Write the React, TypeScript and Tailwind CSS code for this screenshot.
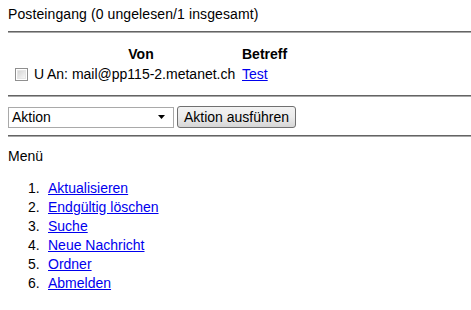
import React from "react";

function Hr({ className = "" }: { className?: string }) {
  return (
    <div className={`h-[2px] border-t border-t-[#646464] border-b border-b-[#a8a8a8] ${className}`} />
  );
}

export default function App() {
  const items = [
    "Aktualisieren",
    "Endgültig löschen",
    "Suche",
    "Neue Nachricht",
    "Ordner",
    "Abmelden",
  ];
  return (
    <div className="w-[471px] h-[310px] bg-white pl-2 text-[14px] leading-[16px] text-black font-['Liberation_Sans',Arial,sans-serif] overflow-hidden">
      <div className="pt-[6px] h-[22px] whitespace-nowrap tracking-[0.1px]">Posteingang (0 ungelesen/1 insgesamt)</div>
      <Hr className="mt-[9px]" />

      <div className="mt-[13px] flex h-[16px] font-bold whitespace-nowrap">
        <div className="w-[26px]" />
        <div className="w-[12px]" />
        <div className="w-[190px] text-center">Von</div>
        <div className="ml-[6px]">Betreff</div>
      </div>

      <div className="mt-[4px] flex h-[16px] items-center whitespace-nowrap">
        <div className="w-[26px] flex items-center">
          <span className="ml-[7px] w-[13px] h-[13px] border border-[#8f8f8f] bg-white p-[1px] flex">
            <span className="flex-1 bg-gradient-to-br from-[#d6d6d6] to-[#f6f6f6] border border-[#e6e6e6]" />
          </span>
        </div>
        <div className="w-[13px]">U</div>
        <div className="w-[189px]">An: mail@pp115-2.metanet.ch</div>
        <a href="#" className="ml-[6px] text-[#0000ee] underline">Test</a>
      </div>

      <Hr className="mt-[13px]" />

      <div className="mt-[9px] flex items-center h-[22px]">
        <div className="w-[166px] h-[21px] border border-[#a9a9a9] bg-white flex items-center pl-[3px] pr-[8px] justify-between">
          <span>Aktion</span>
          <svg width="7" height="4" viewBox="0 0 7 4"><path d="M0 0H7L3.5 4Z" fill="#000" /></svg>
        </div>
        <button className="ml-[3px] w-[119px] h-[22px] rounded-[3px] border border-[#707070] bg-gradient-to-b from-[#f2f2f2] via-[#ebebeb] to-[#d6d6d6] text-[14px] leading-[16px] text-black">
          Aktion ausführen
        </button>
      </div>

      <Hr className="mt-[7px]" />

      <div className="mt-[11px] h-[16px]">Menü</div>

      <ol className="mt-[15px] leading-[19px]">
        {items.map((t, i) => (
          <li key={t} className="flex">
            <span className="w-[40px] pl-[20px]">{i + 1}.</span>
            <a href="#" className="text-[#0000ee] underline">{t}</a>
          </li>
        ))}
      </ol>
    </div>
  );
}
